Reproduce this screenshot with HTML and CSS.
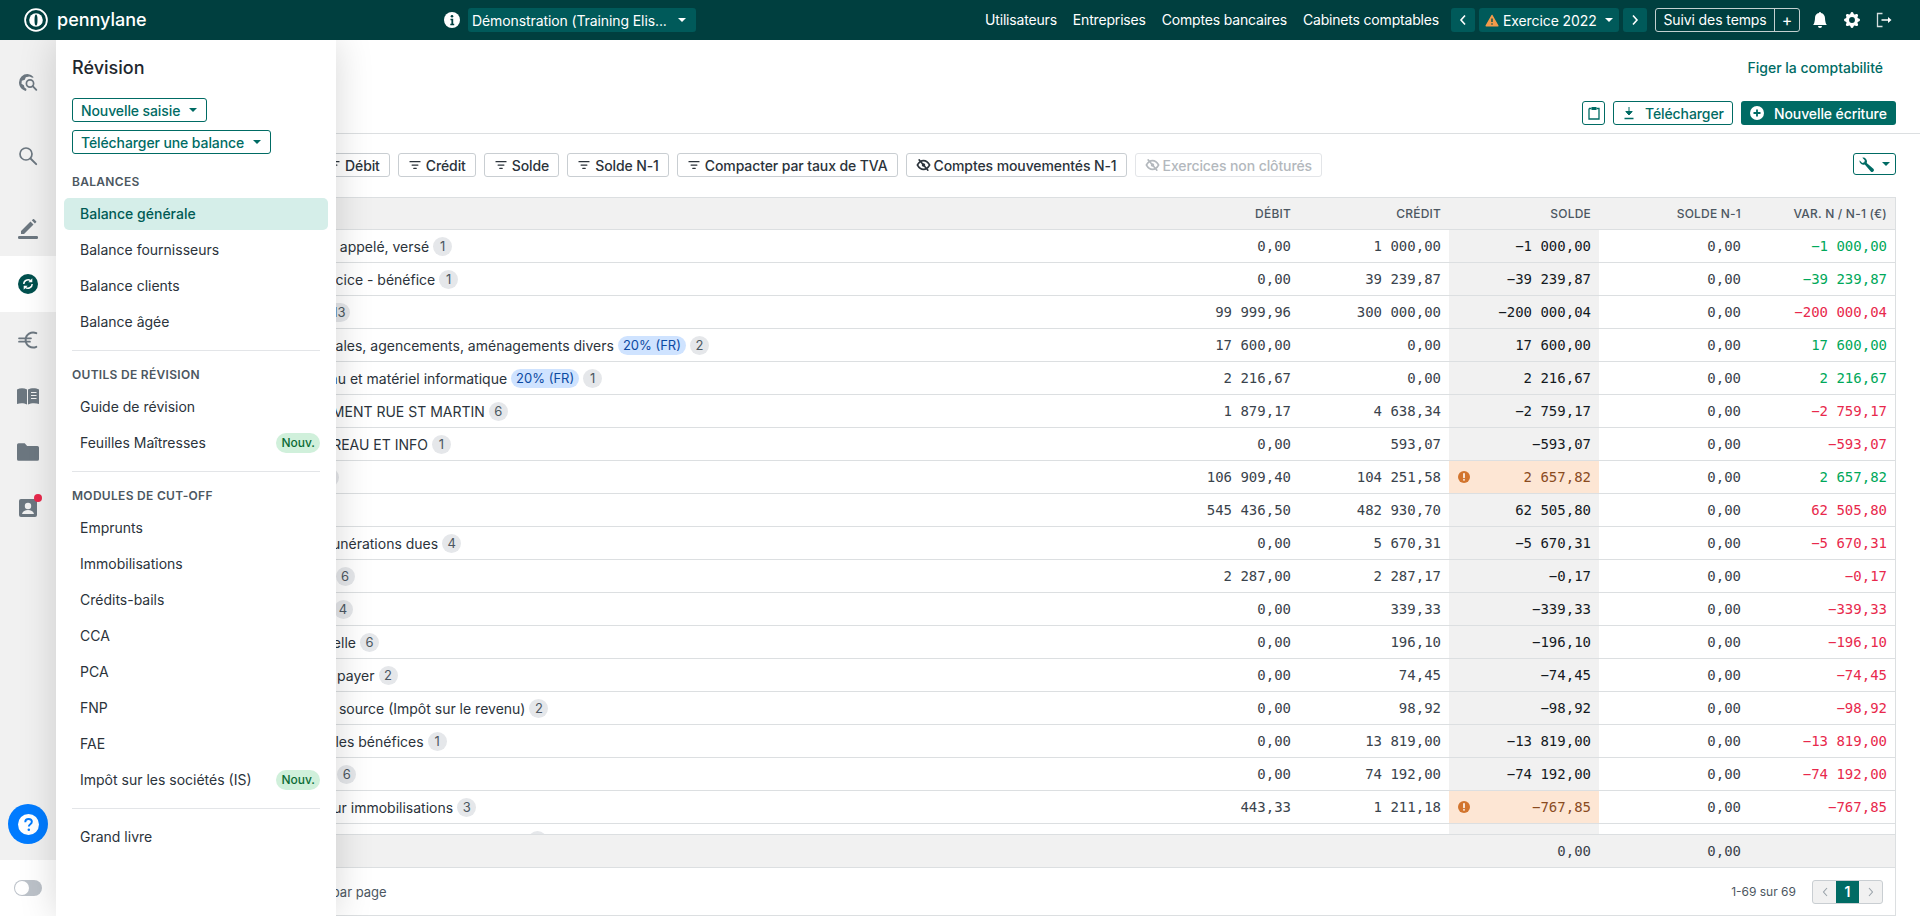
FILE: index.html
```html
<!DOCTYPE html>
<html lang="fr">
<head>
    <meta charset="UTF-8">
    <title>Balance générale - Pennylane</title>
    <link rel="stylesheet" href="styles.css">
</head>
<body>
    <svg class="defs" width="0" height="0">
        <symbol id="i-filter" viewBox="0 0 14 12"><path d="M1 2h12M3.500 6h7M5.500 10h3" fill="none" stroke="currentColor" stroke-width="1.500" stroke-linecap="round"/></symbol>
        <symbol id="i-eye-off" viewBox="0 0 16 16"><path d="M1 8c2-3.600 4.400-5 7-5s5 1.400 7 5c-2 3.600-4.400 5-7 5S3 11.600 1 8z" fill="none" stroke="currentColor" stroke-width="1.800"/><circle cx="8" cy="8" r="2" fill="currentColor"/><path d="M3 2l10 12" stroke="currentColor" stroke-width="1.800" stroke-linecap="round"/></symbol>
        <symbol id="i-warn" viewBox="0 0 12 12"><circle cx="6" cy="6" r="6" fill="currentColor"/><path d="M6 2.800v3.600" stroke="#fff" stroke-width="1.600" stroke-linecap="round"/><circle cx="6" cy="8.800" r=".9" fill="#fff"/></symbol>
    </svg>

    <header class="topbar">
        <div class="brand">
            <svg class="brand-mark" viewBox="0 0 24 24"><circle cx="12" cy="12" r="10.900" fill="none" stroke="#fff" stroke-width="1.800"/><circle cx="12" cy="12" r="6.800" fill="#fff"/><ellipse cx="12" cy="12" rx="1.500" ry="5.500" fill="#003f3f"/></svg>
            <span class="brand-name">pennylane</span>
        </div>
        <svg class="info-icon" viewBox="0 0 16 16"><circle cx="8" cy="8" r="8" fill="#fff"/><circle cx="8" cy="4.200" r="1.300" fill="#003f3f"/><path d="M6.500 6.800h2.700v5h1v1.400H6.300v-1.400h1.100V8.200H6.500z" fill="#003f3f"/></svg>
        <button class="top-select company">Démonstration (Training Elis...<span class="caret"></span></button>
        <nav class="top-links">
            <a>Utilisateurs</a>
            <a>Entreprises</a>
            <a>Comptes bancaires</a>
            <a>Cabinets comptables</a>
        </nav>
        <button class="top-select arrow"><svg viewBox="0 0 8 12"><path d="M6 1.500L2 6l4 4.500" fill="none" stroke="#fff" stroke-width="1.600"/></svg></button>
        <button class="top-select year">
            <svg viewBox="0 0 14 13"><path d="M7 1.500l5.800 10.300H1.200z" fill="#f39a4a" stroke="#f39a4a" stroke-width="1.500" stroke-linejoin="round"/><path d="M7 4.500v3.600" stroke="#004f4f" stroke-width="1.400"/><circle cx="7" cy="10" r=".8" fill="#004f4f"/></svg>
            <span class="year-label">Exercice 2022</span><span class="caret"></span>
        </button>
        <button class="top-select arrow"><svg viewBox="0 0 8 12"><path d="M2 1.500L6 6l-4 4.500" fill="none" stroke="#fff" stroke-width="1.600"/></svg></button>
        <div class="time-track">
            <span class="time-label">Suivi des temps</span>
            <span class="time-add">+</span>
        </div>
        <svg class="top-icon bell" viewBox="0 0 16 16"><path fill="#fff" d="M8 16a2 2 0 0 0 2-2H6a2 2 0 0 0 2 2zm.995-14.901a1 1 0 1 0-1.990 0A5.002 5.002 0 0 0 3 6c0 1.098-.5 6-2 7h14c-1.500-1-2-5.902-2-7 0-2.420-1.720-4.440-4.005-4.901z"/></svg>
        <svg class="top-icon gear" viewBox="0 0 16 16"><path fill="#fff" d="M9.405 1.050c-.413-1.400-2.397-1.400-2.810 0l-.1.340a1.464 1.464 0 0 1-2.105.872l-.31-.17c-1.283-.698-2.686.705-1.987 1.987l.169.311c.446.820.023 1.841-.872 2.105l-.34.1c-1.400.413-1.400 2.397 0 2.810l.34.1a1.464 1.464 0 0 1 .872 2.105l-.17.31c-.698 1.283.705 2.686 1.987 1.987l.311-.169a1.464 1.464 0 0 1 2.105.872l.1.340c.413 1.400 2.397 1.400 2.810 0l.1-.340a1.464 1.464 0 0 1 2.105-.872l.31.17c1.283.698 2.686-.705 1.987-1.987l-.169-.311a1.464 1.464 0 0 1 .872-2.105l.340-.1c1.400-.413 1.400-2.397 0-2.810l-.340-.1a1.464 1.464 0 0 1-.872-2.105l.17-.31c.698-1.283-.705-2.686-1.987-1.987l-.311.169a1.464 1.464 0 0 1-2.105-.872l-.1-.340zM8 10.930a2.929 2.929 0 1 1 0-5.860 2.929 2.929 0 0 1 0 5.858z"/></svg>
        <svg class="top-icon logout" viewBox="0 0 16 16"><path d="M6.500 1.500H1.500v13h5" fill="none" stroke="#d5dede" stroke-width="1.300"/><path d="M5.500 8H14" stroke="#fff" stroke-width="1.500"/><path d="M12 5l3.500 3-3.500 3z" fill="#fff"/></svg>
    </header>

    <div class="layout">
        <div class="rail">
            <nav class="rail-nav">
                <a class="rail-item first">
                    <svg viewBox="0 0 20 20"><path d="M9.500 1A8.500 8.500 0 0 0 1 9.500c0 4.200 3 7.600 7 8.400l.5-1.900-2-1.500-.6-2.300-2.400-1.500.3-3 3-1 1-2.400 3.500-.8c1 .1 2 .6 2.900 1.300l1.600-.6A8.500 8.500 0 0 0 9.500 1z" fill="#6c7780"/><circle cx="12" cy="10.500" r="3.600" fill="none" stroke="#6c7780" stroke-width="1.700"/><path d="M14.700 13.200l3.600 3.600" stroke="#6c7780" stroke-width="1.900" stroke-linecap="round"/></svg>
                </a>
                <a class="rail-item second">
                    <svg viewBox="0 0 20 20"><circle cx="8" cy="8" r="6" fill="none" stroke="#6c7780" stroke-width="1.700"/><path d="M12.500 12.500l5.700 5.700" stroke="#6c7780" stroke-width="1.900" stroke-linecap="round"/></svg>
                </a>
                <a class="rail-item third">
                    <svg viewBox="0 0 20 20"><path d="M2 12.500L11.500 3l3 3L5 15.500H2zM12.800 1.800l1.200-1.100a.8.8 0 0 1 1.100 0l2 2a.8.8 0 0 1 0 1.100l-1.200 1.200z" fill="#6c7780" transform="translate(1 -.5)"/><rect x="0" y="17" width="20" height="3" rx="1.200" fill="#6c7780"/></svg>
                </a>
                <a class="rail-item active">
                    <svg viewBox="0 0 20 20"><circle cx="10" cy="10" r="10" fill="#00504e"/><path d="M5.800 10a4.200 4.200 0 0 1 6.900-3.200M14.200 10a4.200 4.200 0 0 1-6.900 3.200" fill="none" stroke="#fff" stroke-width="1.500"/><path d="M14.300 4.300v4h-4zM5.700 15.700v-4h4z" fill="#fff"/></svg>
                </a>
                <a class="rail-item">
                    <svg viewBox="0 0 20 20"><path d="M18.300 3.200A7.500 7.500 0 1 0 18.300 16.800" fill="none" stroke="#6c7780" stroke-width="2" stroke-linecap="round"/><path d="M1 8.300h12M1 11.700h11" stroke="#6c7780" stroke-width="1.700" stroke-linecap="round"/></svg>
                </a>
                <a class="rail-item">
                    <svg class="wide" viewBox="0 0 22 18"><path d="M0 2.500C3 .8 7 .8 10 2.500v15C7 15.800 3 15.800 0 17zM11 2.500c3-1.700 8-1.700 11 0V17c-3-1.200-8-1.200-11 .5z" fill="#6c7780"/><path d="M14 5.500h5.500M14 8.500h5.500M14 11.500h5.500" stroke="#f1f1f1" stroke-width="1.200"/></svg>
                </a>
                <a class="rail-item">
                    <svg class="wide" viewBox="0 0 20 16"><path d="M1.500 0h5.500l2.200 2.500h9.300A1.500 1.500 0 0 1 20 4v10.500a1.500 1.500 0 0 1-1.500 1.500h-17A1.500 1.500 0 0 1 0 14.500v-13A1.500 1.500 0 0 1 1.500 0z" fill="#6c7780"/></svg>
                </a>
                <a class="rail-item contact">
                    <svg viewBox="0 0 18 18"><rect width="18" height="18" rx="2" fill="#6c7780"/><circle cx="9" cy="7" r="3.200" fill="#f1f1f1"/><path d="M3 15c.8-3 3-4 6-4s5.200 1 6 4z" fill="#f1f1f1"/></svg>
                    <span class="rail-dot"></span>
                </a>
                <button class="help-btn">
                    <svg viewBox="0 0 20 20"><circle cx="10" cy="10" r="10" fill="#fff"/><path d="M6.900 7.800c0-2 1.400-3.100 3.200-3.100s3.100 1 3.100 2.700c0 2.300-2.900 2.300-2.900 4.500" fill="none" stroke="#007bff" stroke-width="1.800"/><circle cx="10.300" cy="15" r="1.200" fill="#007bff"/></svg>
                </button>
            </nav>
            <div class="rail-bottom"><span class="toggle"></span></div>
        </div>

        <aside class="panel">
            <h2 class="panel-title">Révision</h2>
            <div class="panel-actions">
                <button class="panel-btn">Nouvelle saisie<span class="caret"></span></button>
                <button class="panel-btn">Télécharger une balance<span class="caret"></span></button>
            </div>
            <h3 class="panel-heading">Balances</h3>
            <a class="panel-link current">Balance générale</a>
            <a class="panel-link">Balance fournisseurs</a>
            <a class="panel-link">Balance clients</a>
            <a class="panel-link">Balance âgée</a>
            <hr class="panel-sep">
            <h3 class="panel-heading">Outils de révision</h3>
            <a class="panel-link">Guide de révision</a>
            <a class="panel-link">Feuilles Maîtresses<span class="new-tag">Nouv.</span></a>
            <hr class="panel-sep">
            <h3 class="panel-heading">Modules de cut-off</h3>
            <a class="panel-link">Emprunts</a>
            <a class="panel-link">Immobilisations</a>
            <a class="panel-link">Crédits-bails</a>
            <a class="panel-link">CCA</a>
            <a class="panel-link">PCA</a>
            <a class="panel-link">FNP</a>
            <a class="panel-link">FAE</a>
            <a class="panel-link">Impôt sur les sociétés (IS)<span class="new-tag">Nouv.</span></a>
            <hr class="panel-sep">
            <a class="panel-link">Grand livre</a>
        </aside>

        <main class="content">
            <div class="page-head">
                <a class="freeze-link">Figer la comptabilité</a>
                <div class="page-actions">
                    <button class="btn-outline square">
                        <svg viewBox="0 0 12 14"><path d="M1 2.500h2.500M8.500 2.500H11V13H1V2.500" fill="none" stroke="currentColor" stroke-width="1.300"/><rect x="3.500" y="1" width="5" height="3" fill="currentColor"/></svg>
                    </button>
                    <button class="btn-outline">
                        <svg viewBox="0 0 12 14"><path d="M6 1v7M2.800 5.500L6 9l3.200-3.500z" fill="currentColor" stroke="currentColor"/><path d="M1.500 12.500h9" stroke="currentColor" stroke-width="1.500"/></svg>
                        Télécharger
                    </button>
                    <button class="btn-solid">
                        <svg viewBox="0 0 14 14"><circle cx="7" cy="7" r="7" fill="#fff"/><path d="M7 3.500v7M3.500 7h7" stroke="#006b64" stroke-width="1.800"/></svg>
                        Nouvelle écriture
                    </button>
                </div>
            </div>

            <div class="filters">
                <button class="filter-btn"><svg class="ico"><use href="#i-filter"/></svg>Débit</button>
                <button class="filter-btn"><svg class="ico"><use href="#i-filter"/></svg>Crédit</button>
                <button class="filter-btn"><svg class="ico"><use href="#i-filter"/></svg>Solde</button>
                <button class="filter-btn"><svg class="ico"><use href="#i-filter"/></svg>Solde N-1</button>
                <button class="filter-btn"><svg class="ico"><use href="#i-filter"/></svg>Compacter par taux de TVA</button>
                <button class="filter-btn tight"><svg class="ico"><use href="#i-eye-off"/></svg>Comptes mouvementés N-1</button>
                <button class="filter-btn tight off"><svg class="ico"><use href="#i-eye-off"/></svg>Exercices non clôturés</button>
                <button class="tools-btn">
                    <svg viewBox="0 0 14 14"><path d="M.4 3.500a3.700 3.700 0 0 0 5 3.400l5.400 6.500a1.700 1.700 0 0 0 2.600-2.400L7.200 5.500A3.700 3.700 0 0 0 3.100.6L5.400 3 5 5l-2 .5L.7 3.200z" fill="currentColor"/></svg>
                    <span class="caret"></span>
                </button>
            </div>

            <div class="table">
                <div class="row head">
                    <div class="cell name">Compte</div>
                    <div class="cell">Débit</div>
                    <div class="cell">Crédit</div>
                    <div class="cell">Solde</div>
                    <div class="cell">Solde N-1</div>
                    <div class="cell">Var. N / N-1 (€)</div>
                </div>
                <div class="rows">
                    <div class="row"><div class="cell name">101300 -   Capital souscrit - appelé, versé<span class="count">1</span></div><div class="cell">0,00</div><div class="cell">1 000,00</div><div class="cell solde">−1 000,00</div><div class="cell">0,00</div><div class="cell up">−1 000,00</div></div>
                    <div class="row"><div class="cell name">120000 -  Résultat de l'exercice - bénéfice<span class="count">1</span></div><div class="cell">0,00</div><div class="cell">39 239,87</div><div class="cell solde">−39 239,87</div><div class="cell">0,00</div><div class="cell up">−39 239,87</div></div>
                    <div class="row"><div class="cell name">164000 - Emprunt auprès<span class="count">13</span></div><div class="cell">99 999,96</div><div class="cell">300 000,00</div><div class="cell solde">−200 000,04</div><div class="cell">0,00</div><div class="cell down">−200 000,04</div></div>
                    <div class="row"><div class="cell name">218100 - Installations générales, agencements, aménagements divers<span class="rate">20% (FR)</span><span class="count">2</span></div><div class="cell">17 600,00</div><div class="cell">0,00</div><div class="cell solde">17 600,00</div><div class="cell">0,00</div><div class="cell up">17 600,00</div></div>
                    <div class="row"><div class="cell name">218300 -  Matériel de bureau et matériel informatique<span class="rate">20% (FR)</span><span class="count">1</span></div><div class="cell">2 216,67</div><div class="cell">0,00</div><div class="cell solde">2 216,67</div><div class="cell">0,00</div><div class="cell up">2 216,67</div></div>
                    <div class="row"><div class="cell name">2810 -  AMORT. AMENAGEMENT RUE ST MARTIN<span class="count">6</span></div><div class="cell">1 879,17</div><div class="cell">4 638,34</div><div class="cell solde">−2 759,17</div><div class="cell">0,00</div><div class="cell down">−2 759,17</div></div>
                    <div class="row"><div class="cell name">28183 -   AMORT. MAT. BUREAU ET INFO<span class="count">1</span></div><div class="cell">0,00</div><div class="cell">593,07</div><div class="cell solde">−593,07</div><div class="cell">0,00</div><div class="cell down">−593,07</div></div>
                    <div class="row"><div class="cell name">401000 -    Fournisseurs<span class="count">1</span></div><div class="cell">106 909,40</div><div class="cell">104 251,58</div><div class="cell solde warn"><svg class="warn-icon"><use href="#i-warn"/></svg>2 657,82</div><div class="cell">0,00</div><div class="cell up">2 657,82</div></div>
                    <div class="row"><div class="cell name">411000 - Clients</div><div class="cell">545 436,50</div><div class="cell">482 930,70</div><div class="cell solde">62 505,80</div><div class="cell">0,00</div><div class="cell down">62 505,80</div></div>
                    <div class="row"><div class="cell name">421000 -   Personnel - rémunérations dues<span class="count">4</span></div><div class="cell">0,00</div><div class="cell">5 670,31</div><div class="cell solde">−5 670,31</div><div class="cell">0,00</div><div class="cell down">−5 670,31</div></div>
                    <div class="row"><div class="cell name">431000 -   Sécurité sociale<span class="count">6</span></div><div class="cell">2 287,00</div><div class="cell">2 287,17</div><div class="cell solde">−0,17</div><div class="cell">0,00</div><div class="cell down">−0,17</div></div>
                    <div class="row"><div class="cell name">437 -    Autres organismes<span class="count">4</span></div><div class="cell">0,00</div><div class="cell">339,33</div><div class="cell solde">−339,33</div><div class="cell">0,00</div><div class="cell down">−339,33</div></div>
                    <div class="row"><div class="cell name">437300 -   Mutuelle - Mutuelle<span class="count">6</span></div><div class="cell">0,00</div><div class="cell">196,10</div><div class="cell solde">−196,10</div><div class="cell">0,00</div><div class="cell down">−196,10</div></div>
                    <div class="row"><div class="cell name">438600 - Autres charges à payer<span class="count">2</span></div><div class="cell">0,00</div><div class="cell">74,45</div><div class="cell solde">−74,45</div><div class="cell">0,00</div><div class="cell down">−74,45</div></div>
                    <div class="row"><div class="cell name">442100 - Prélèvements à la source (Impôt sur le revenu)<span class="count">2</span></div><div class="cell">0,00</div><div class="cell">98,92</div><div class="cell solde">−98,92</div><div class="cell">0,00</div><div class="cell down">−98,92</div></div>
                    <div class="row"><div class="cell name">444000 - État - Impôts sur les bénéfices<span class="count">1</span></div><div class="cell">0,00</div><div class="cell">13 819,00</div><div class="cell solde">−13 819,00</div><div class="cell">0,00</div><div class="cell down">−13 819,00</div></div>
                    <div class="row"><div class="cell name">445510 -   TVA à décaisser<span class="count">6</span></div><div class="cell">0,00</div><div class="cell">74 192,00</div><div class="cell solde">−74 192,00</div><div class="cell">0,00</div><div class="cell down">−74 192,00</div></div>
                    <div class="row"><div class="cell name">445620 - TVA déductible sur immobilisations<span class="count">3</span></div><div class="cell">443,33</div><div class="cell">1 211,18</div><div class="cell solde warn"><svg class="warn-icon"><use href="#i-warn"/></svg>−767,85</div><div class="cell">0,00</div><div class="cell down">−767,85</div></div>
                    <div class="row"><div class="cell name">445660 -     TVA déductible sur autres biens et services<span class="count">8</span></div><div class="cell"></div><div class="cell"></div><div class="cell solde"></div><div class="cell"></div><div class="cell"></div></div>
                </div>
                <div class="row foot">
                    <div class="cell name"></div>
                    <div class="cell"></div>
                    <div class="cell"></div>
                    <div class="cell">0,00</div>
                    <div class="cell">0,00</div>
                    <div class="cell"></div>
                </div>
                <div class="pager-row">
                    <span class="per-page">100 résultats par page</span>
                    <span class="pager-count">1-69 sur 69</span>
                    <div class="pager">
                        <span class="pager-arrow"><svg viewBox="0 0 8 12"><path d="M6 2L2.500 6 6 10" fill="none" stroke="#9aa3aa" stroke-width="1.100"/></svg></span>
                        <span class="pager-num">1</span>
                        <span class="pager-arrow"><svg viewBox="0 0 8 12"><path d="M2 2l3.500 4L2 10" fill="none" stroke="#9aa3aa" stroke-width="1.100"/></svg></span>
                    </div>
                </div>
            </div>
        </main>
    </div>
</body>
</html>
```
FILE: styles.css
```css
* {
    margin: 0;
    padding: 0;
    box-sizing: border-box;
}

html, body {
    width: 100%;
    height: 100%;
}

body {
    font-family: Inter, "Noto Sans", sans-serif;
    font-size: 14px;
    color: #2b333b;
    background: #fff;
    overflow: hidden;
    display: flex;
    flex-direction: column;
}

button {
    font-family: inherit;
    letter-spacing: -0.1px;
    white-space: nowrap;
    cursor: pointer;
}

.defs {
    position: absolute;
}

.caret {
    display: inline-block;
    flex: none;
    width: 0;
    height: 0;
    border-left: 4px solid transparent;
    border-right: 4px solid transparent;
    border-top: 4px solid currentColor;
}

/* top bar */
.topbar {
    height: 40px;
    flex: none;
    background: #003f3f;
    color: #fff;
    display: flex;
    align-items: center;
    padding: 0 28px 0 24px;
    position: relative;
    z-index: 5;
}

.brand {
    display: flex;
    align-items: center;
    gap: 9px;
    width: 420px;
}

.brand-mark {
    width: 24px;
    height: 24px;
}

.brand-name {
    font-size: 18px;
    font-weight: 500;
    padding-bottom: 1px;
}

.info-icon {
    width: 16px;
    height: 16px;
    margin-right: 8px;
}

.top-select {
    height: 24px;
    flex: none;
    border: none;
    border-radius: 3px;
    background: #005a5a;
    color: #fff;
    font-size: 14px;
    display: flex;
    align-items: center;
    justify-content: center;
}

.top-select svg {
    display: block;
}

.company {
    width: 228px;
    padding: 0 10px 0 4px;
    justify-content: space-between;
}

.top-links {
    display: flex;
    gap: 16px;
    margin-left: auto;
    margin-right: 12px;
    padding-bottom: 1px;
    letter-spacing: -0.18px;
}

.arrow {
    width: 24px;
}

.arrow svg {
    width: 8px;
    height: 12px;
}

.year {
    width: 140px;
    margin: 0 4px;
    padding-left: 6px;
    justify-content: flex-start;
}

.year svg {
    width: 14px;
    height: 13px;
    margin-right: 4px;
}

.year .caret {
    margin-left: 8px;
}

.time-track {
    width: 145px;
    height: 24px;
    flex: none;
    margin-left: 8px;
    display: flex;
    align-items: center;
    border: 1px solid #c3cfcf;
    border-radius: 3px;
    white-space: nowrap;
    letter-spacing: -0.1px;
}

.time-label {
    width: 119px;
    flex: none;
    text-align: center;
    border-right: 1px solid #c3cfcf;
    line-height: 21px;
    height: 22px;
}

.time-add {
    flex: 1;
    text-align: center;
    font-size: 16px;
}

.top-icon {
    width: 16px;
    height: 16px;
    flex: none;
}

.bell {
    margin-left: 12px;
}

.gear, .logout {
    margin-left: 16px;
}

/* left rail */
.layout {
    flex: 1;
    display: flex;
    position: relative;
    min-height: 0;
}

.rail {
    width: 56px;
    flex: none;
    display: flex;
    flex-direction: column;
}

.rail-nav {
    flex: 1;
    background: #f1f1f1;
    padding-top: 15px;
    display: flex;
    flex-direction: column;
    align-items: center;
    position: relative;
}

.rail-item {
    width: 56px;
    height: 56px;
    flex: none;
    display: flex;
    align-items: center;
    justify-content: center;
    position: relative;
}

.rail-item svg {
    width: 20px;
    height: 20px;
}

.rail-item svg.wide {
    width: 22px;
    height: 18px;
}

.rail-item.second {
    margin-top: 17px;
}

.rail-item.third {
    margin-top: 17px;
}

.rail-item.active {
    margin-top: -1px;
    background: #fff;
}

.rail-item.contact svg {
    width: 18px;
    height: 18px;
}

.rail-dot {
    position: absolute;
    top: 14px;
    right: 14px;
    width: 8px;
    height: 8px;
    border-radius: 50%;
    background: #e8294c;
}

.help-btn {
    width: 40px;
    height: 40px;
    margin-top: auto;
    margin-bottom: 16px;
    border: none;
    border-radius: 50%;
    background: #007bff;
    display: flex;
    align-items: center;
    justify-content: center;
}

.help-btn svg {
    width: 21px;
    height: 21px;
}

.rail-bottom {
    height: 56px;
    display: flex;
    align-items: center;
    justify-content: center;
}

.toggle {
    width: 28px;
    height: 16px;
    border-radius: 8px;
    background: #bcc2c9;
    position: relative;
}

.toggle::after {
    content: "";
    position: absolute;
    left: 1px;
    top: 1px;
    width: 14px;
    height: 14px;
    border-radius: 50%;
    background: #fff;
}

/* revision panel, opened over the page */
.panel {
    position: absolute;
    left: 56px;
    top: 0;
    bottom: 0;
    width: 280px;
    background: #fff;
    padding: 16px 8px 0;
    box-shadow: 0 0 36px rgba(0, 0, 0, 0.16);
    z-index: 3;
    display: flex;
    flex-direction: column;
}

.panel-title {
    font-size: 18px;
    font-weight: 500;
    line-height: 24px;
    color: #1f272e;
    margin-left: 8px;
}

.panel-actions {
    display: flex;
    flex-direction: column;
    align-items: flex-start;
    gap: 8px;
    margin: 18px 0 0 8px;
}

.panel-btn {
    height: 24px;
    padding: 0 9px 0 8px;
    background: #fff;
    border: 1px solid #006b64;
    border-radius: 3px;
    color: #006b64;
    font-size: 14px;
    font-weight: 500;
    display: flex;
    align-items: center;
    gap: 9px;
}

.panel-heading {
    font-size: 12px;
    font-weight: 600;
    line-height: 16px;
    letter-spacing: 0.3px;
    text-transform: uppercase;
    color: #4c5761;
    padding-top: 1px;
    margin: 0 0 8px 8px;
}

.panel-actions + .panel-heading {
    margin-top: 19px;
}

.panel-link {
    height: 32px;
    flex: none;
    margin-bottom: 4px;
    padding: 0 8px 1px 16px;
    border-radius: 5px;
    display: flex;
    align-items: center;
    justify-content: space-between;
    color: #2b333b;
}

.panel-link.current {
    background: #d5eee9;
    color: #005b55;
    font-weight: 500;
}

.panel-sep {
    border: none;
    border-top: 1px solid #e3e5e8;
    margin: 8px 8px 15px;
}

.panel-sep + .panel-link {
    margin-top: -3px;
}

.new-tag {
    height: 20px;
    line-height: 20px;
    padding: 0 5px;
    border-radius: 10px;
    background: #d0f0db;
    color: #0b6b35;
    font-size: 12px;
    font-weight: 500;
}

/* page */
.content {
    flex: 1;
    min-width: 0;
    display: flex;
    flex-direction: column;
}

.page-head {
    height: 94px;
    flex: none;
    border-bottom: 1px solid #dcdfe1;
    padding: 18px 24px 0 0;
    display: flex;
    flex-direction: column;
    align-items: flex-end;
}

.freeze-link {
    color: #006b64;
    font-weight: 500;
    line-height: 20px;
    margin-right: 13px;
}

.page-actions {
    display: flex;
    gap: 8px;
    margin-top: 23px;
}

.btn-outline, .btn-solid {
    height: 24px;
    border-radius: 3px;
    font-size: 14px;
    font-weight: 500;
    display: flex;
    align-items: center;
}

.btn-outline {
    width: 120px;
    padding-left: 9px;
    gap: 10px;
    background: #fff;
    border: 1px solid #006b64;
    color: #006b64;
}

.btn-outline.square {
    width: 23px;
    padding: 0;
    justify-content: center;
}

.btn-outline svg {
    width: 12px;
    height: 14px;
}

.btn-solid {
    width: 155px;
    padding-left: 9px;
    gap: 10px;
    background: #006b64;
    border: none;
    color: #fff;
}

.btn-solid svg {
    width: 14px;
    height: 14px;
}

.filters {
    height: 24px;
    flex: none;
    margin: 19px 24px 20px 0;
    padding-left: 261px;
    display: flex;
    gap: 8px;
}

.filter-btn {
    height: 24px;
    padding: 0 9px 0 10px;
    background: #fff;
    border: 1px solid #c9ced2;
    border-radius: 3px;
    color: #2b333b;
    font-size: 14px;
    font-weight: 500;
    display: flex;
    align-items: center;
    gap: 5px;
}

.filter-btn.tight {
    gap: 3px;
    padding-left: 9px;
}

.filter-btn.off {
    color: #b3b8bd;
    border-color: #e3e5e8;
}

.ico {
    width: 12px;
    height: 10px;
}

.tight .ico {
    width: 15px;
    height: 14px;
}

.tools-btn {
    width: 43px;
    height: 22px;
    margin-left: auto;
    background: #fff;
    border: 1px solid #006b64;
    border-radius: 3px;
    color: #006b64;
    display: flex;
    align-items: center;
    justify-content: center;
    gap: 8px;
}

.tools-btn svg {
    width: 15px;
    height: 15px;
}

/* balance table */
.table {
    flex: 1;
    min-height: 0;
    margin: 0 24px;
    border-right: 1px solid #dcdfe1;
    display: flex;
    flex-direction: column;
}

.row {
    display: grid;
    grid-template-columns: 1fr 150px 150px 150px 150px 146px;
    height: 33px;
    flex: none;
    border-bottom: 1px solid #dcdfe1;
}

.cell {
    padding: 0 8px 0 9px;
    display: flex;
    align-items: center;
    justify-content: flex-end;
    font-family: "DejaVu Sans Mono", monospace;
    font-size: 14px;
    white-space: pre;
    color: #3a434c;
}

.cell.name {
    padding: 0 8px 0 74px;
    justify-content: flex-start;
    font-family: Inter, "Noto Sans", sans-serif;
    color: #2b333b;
    overflow: hidden;
}

.row.head {
    background: #f1f1f1;
    border-top: 1px solid #dcdfe1;
}

.row.head .cell {
    font-family: Inter, "Noto Sans", sans-serif;
    font-size: 12px;
    font-weight: 500;
    letter-spacing: 0.2px;
    text-transform: uppercase;
    color: #4c5761;
}

.rows {
    height: 604px;
    flex: none;
    overflow: hidden;
}

.row.foot {
    height: 34px;
    background: #f1f1f1;
    border-top: 1px solid #dcdfe1;
}

.solde {
    background: #f1f1f1;
    color: #14191e;
}

.solde.warn {
    background: #fde6d4;
    color: #8a4b1f;
    justify-content: space-between;
}

.warn-icon {
    width: 12px;
    height: 12px;
    color: #d2752f;
}

.up {
    color: #00a85a;
}

.down {
    color: #e8294c;
}

.count, .rate {
    height: 19px;
    line-height: 19px;
    border-radius: 10px;
    font-family: Inter, "Noto Sans", sans-serif;
    font-size: 13px;
    margin-left: 4px;
    flex: none;
}

.count {
    min-width: 19px;
    padding: 0 5px;
    text-align: center;
    background: #e5e7ea;
    color: #4c5761;
}

.rate {
    padding: 0 5px;
    background: #cfe3ff;
    color: #0b4aa2;
}

.pager-row {
    height: 48px;
    flex: none;
    border-bottom: 1px solid #dcdfe1;
    display: flex;
    align-items: center;
    padding: 0 12px 0 8px;
    font-size: 12px;
    color: #4c5761;
}

.per-page {
    margin-left: 162px;
    font-size: 13px;
}

.pager-count {
    margin-left: auto;
    margin-right: 16px;
}

.pager {
    width: 71px;
    height: 24px;
    border: 1px solid #c9ced2;
    border-radius: 3px;
    background: #f1f1f1;
    display: flex;
    align-items: stretch;
    overflow: hidden;
}

.pager-arrow {
    flex: 1;
    display: flex;
    align-items: center;
    justify-content: center;
}

.pager-arrow svg {
    width: 8px;
    height: 12px;
}

.pager-num {
    width: 23px;
    background: #006b64;
    color: #fff;
    font-size: 14px;
    font-weight: 600;
    text-align: center;
    line-height: 22px;
}
```
